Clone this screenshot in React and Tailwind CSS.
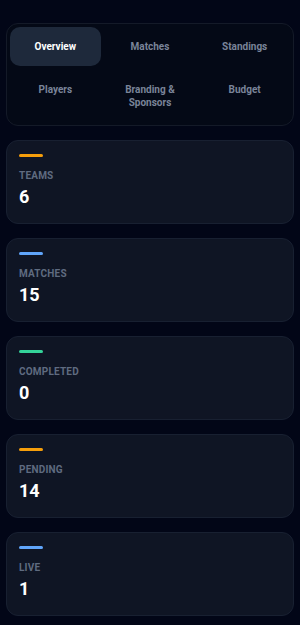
import { useState } from 'react';

const TABS = ['Overview', 'Matches', 'Standings', 'Players', 'Branding & Sponsors', 'Budget'];

const STATS = [
  { label: 'Teams', value: 6, bar: 'bg-[#f59e0b]' },
  { label: 'Matches', value: 15, bar: 'bg-[#60a5fa]' },
  { label: 'Completed', value: 0, bar: 'bg-[#34d399]' },
  { label: 'Pending', value: 14, bar: 'bg-[#f59e0b]' },
  { label: 'Live', value: 1, bar: 'bg-[#60a5fa]' },
];

export default function App() {
  const [tab, setTab] = useState('Overview');

  return (
    <div
      className="min-h-[625px] bg-[#020617] px-[6px] pt-[23px] pb-4"
      style={{ fontFamily: 'Roboto, "Noto Sans", sans-serif' }}
    >
      <div className="grid grid-cols-3 gap-1 rounded-xl border border-[#141a28] bg-[#040916] p-[3px]">
        {TABS.map(name => {
          const active = name === tab;
          return (
            <button
              key={name}
              onClick={() => setTab(name)}
              className={`flex items-start justify-center rounded-[10px] px-2 py-[13px] text-center text-[10px] font-bold leading-[13px] ${
                active ? 'bg-[#1e293b] text-white' : 'text-[#7a8499]'
              }`}
            >
              {name}
            </button>
          );
        })}
      </div>

      <div className="mt-[14px] flex flex-col gap-[14px]">
        {STATS.map(s => (
          <div key={s.label} className="rounded-xl border border-[#182031] bg-[#0f1524] px-[12px] pt-[13px] pb-[14px]">
            <div className={`h-[3px] w-6 rounded-full ${s.bar}`} />
            <div className="mt-[12px] text-[10px] font-bold uppercase leading-[13px] tracking-[0.02em] text-[#5f6b80]">
              {s.label}
            </div>
            <div className="mt-[3px] text-[18px] font-bold leading-6 text-white">{s.value}</div>
          </div>
        ))}
      </div>
    </div>
  );
}
